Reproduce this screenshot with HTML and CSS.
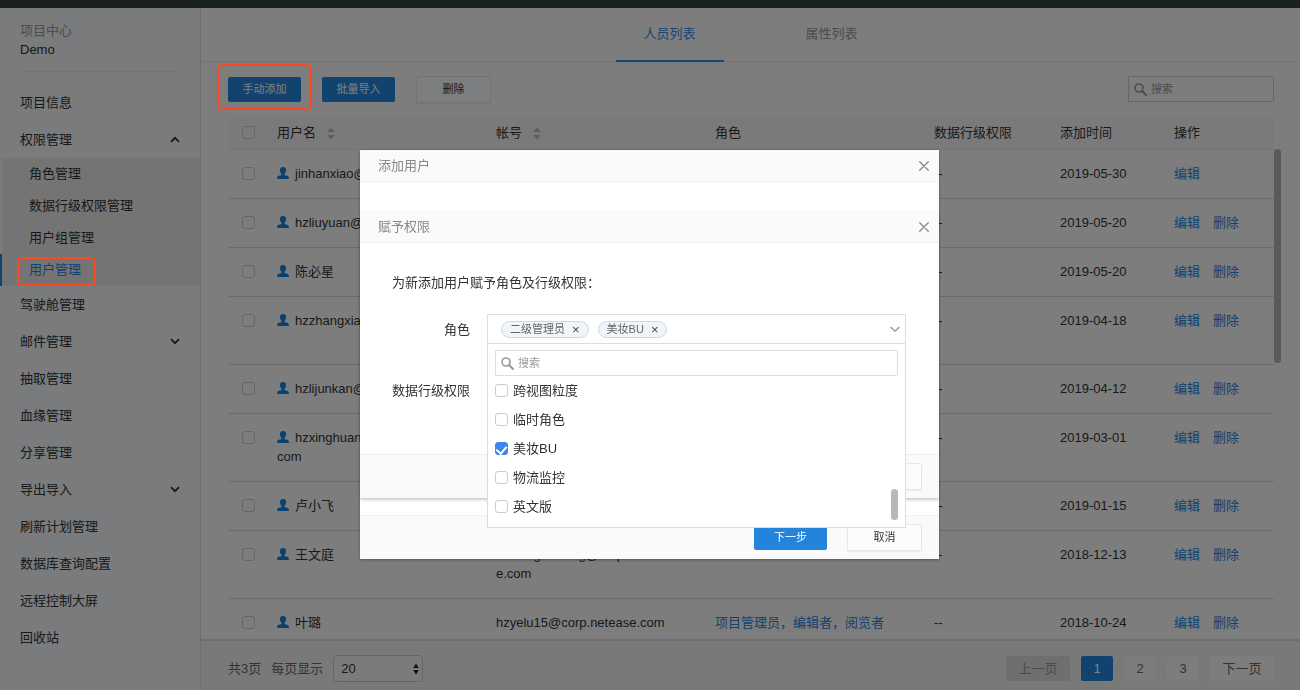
FILE: index.html
```html
<!DOCTYPE html>
<html lang="zh-CN">
<head>
<meta charset="utf-8">
<title>用户管理</title>
<link rel="stylesheet" href="styles.css">
</head>
<body>
<svg class="defs" aria-hidden="true">
  <symbol id="user" viewBox="0 0 12 12"><path d="M6 0C4 0 2.900 1.300 2.900 3.100c0 1.600.700 2.900 1.600 3.800v1.200C3.400 8.700.300 8.700.200 10.600V12h11.600v-1.400C11.700 8.700 8.600 8.700 7.500 8.100V6.900c.900-.900 1.600-2.200 1.600-3.800C9.100 1.300 8 0 6 0z" fill="currentColor"/></symbol>
  <symbol id="search" viewBox="0 0 13 13"><circle cx="5" cy="5" r="4" fill="none" stroke="currentColor" stroke-width="1.600"/><path d="M8 8l4 4" stroke="currentColor" stroke-width="2" stroke-linecap="round"/></symbol>
  <symbol id="sort" viewBox="0 0 8 13"><path d="M4 .500L7.800 5H.200zM4 12.500L.200 8h7.600z" fill="currentColor"/></symbol>
  <symbol id="close" viewBox="0 0 10 10"><path d="M.700.700l8.600 8.600M9.300.700L.700 9.300" stroke="currentColor" stroke-width="1.300" stroke-linecap="round"/></symbol>
  <symbol id="down" viewBox="0 0 10 7"><path d="M1 1.200l4 4 4-4" fill="none" stroke="currentColor" stroke-width="1.800"/></symbol>
  <symbol id="up" viewBox="0 0 10 7"><path d="M1 5.800l4-4 4 4" fill="none" stroke="currentColor" stroke-width="1.800"/></symbol>
  <symbol id="down-thin" viewBox="0 0 10 7"><path d="M.700 1l4.300 4.300L9.300 1" fill="none" stroke="currentColor" stroke-width="1.100"/></symbol>
  <symbol id="updown" viewBox="0 0 6 12"><path d="M3 .500L5.800 5H.200zM3 11.500L.200 7h5.600z" fill="currentColor"/></symbol>
</svg>

<div class="app">
  <div class="topbar"></div>
  <div class="workspace">
    <nav class="sidebar">
      <div class="project">
        <div class="project-label">项目中心</div>
        <div class="project-name">Demo</div>
      </div>
      <a class="nav-item" href="#">项目信息</a>
      <button class="nav-item" type="button">权限管理<svg class="caret"><use href="#up"/></svg></button>
      <div class="submenu">
        <a class="sub-item" href="#">角色管理</a>
        <a class="sub-item" href="#">数据行级权限管理</a>
        <a class="sub-item" href="#">用户组管理</a>
        <a class="sub-item active" href="#">用户管理</a>
      </div>
      <a class="nav-item" href="#">驾驶舱管理</a>
      <button class="nav-item" type="button">邮件管理<svg class="caret"><use href="#down"/></svg></button>
      <a class="nav-item" href="#">抽取管理</a>
      <a class="nav-item" href="#">血缘管理</a>
      <a class="nav-item" href="#">分享管理</a>
      <button class="nav-item" type="button">导出导入<svg class="caret"><use href="#down"/></svg></button>
      <a class="nav-item" href="#">刷新计划管理</a>
      <a class="nav-item" href="#">数据库查询配置</a>
      <a class="nav-item" href="#">远程控制大屏</a>
      <a class="nav-item" href="#">回收站</a>
    </nav>

    <main class="main">
      <div class="tabs">
        <a class="tab current" href="#">人员列表</a>
        <a class="tab" href="#">属性列表</a>
      </div>
      <div class="toolbar">
        <button class="btn primary" type="button">手动添加</button>
        <button class="btn primary" type="button">批量导入</button>
        <button class="btn plain" type="button">删除</button>
        <label class="search toolbar-search"><svg class="search-icon"><use href="#search"/></svg><input type="text" placeholder="搜索" aria-label="搜索用户"></label>
      </div>
      <div class="table-area">
        <table class="users">
          <colgroup><col class="c-check"><col><col><col><col class="c-perm"><col class="c-time"><col class="c-op"></colgroup>
          <thead>
            <tr><th class="check"><input type="checkbox" aria-label="全选"></th><th>用户名<svg class="sort"><use href="#sort"/></svg></th><th>帐号<svg class="sort"><use href="#sort"/></svg></th><th>角色</th><th>数据行级权限</th><th>添加时间</th><th>操作</th></tr>
          </thead>
          <tbody>
            <tr><td class="check"><input type="checkbox" aria-label="选择 jinhanxiao"></td><td><svg class="user"><use href="#user"/></svg>jinhanxiao@</td><td></td><td></td><td>--</td><td>2019-05-30</td><td><a href="#">编辑</a></td></tr>
            <tr><td class="check"><input type="checkbox" aria-label="选择 hzliuyuan"></td><td><svg class="user"><use href="#user"/></svg>hzliuyuan@</td><td></td><td></td><td>--</td><td>2019-05-20</td><td><a href="#">编辑</a><a href="#">删除</a></td></tr>
            <tr><td class="check"><input type="checkbox" aria-label="选择 陈必星"></td><td><svg class="user"><use href="#user"/></svg>陈必星</td><td></td><td></td><td>--</td><td>2019-05-20</td><td><a href="#">编辑</a><a href="#">删除</a></td></tr>
            <tr class="two-line"><td class="check"><input type="checkbox" aria-label="选择 hzzhangxiao"></td><td><svg class="user"><use href="#user"/></svg>hzzhangxiao</td><td></td><td></td><td>--</td><td>2019-04-18</td><td><a href="#">编辑</a><a href="#">删除</a></td></tr>
            <tr><td class="check"><input type="checkbox" aria-label="选择 hzlijunkan"></td><td><svg class="user"><use href="#user"/></svg>hzlijunkan@</td><td></td><td></td><td>--</td><td>2019-04-12</td><td><a href="#">编辑</a><a href="#">删除</a></td></tr>
            <tr class="two-line"><td class="check"><input type="checkbox" aria-label="选择 hzxinghuan"></td><td><svg class="user"><use href="#user"/></svg>hzxinghuan<br>com</td><td></td><td></td><td>--</td><td>2019-03-01</td><td><a href="#">编辑</a><a href="#">删除</a></td></tr>
            <tr><td class="check"><input type="checkbox" aria-label="选择 卢小飞"></td><td><svg class="user"><use href="#user"/></svg>卢小飞</td><td></td><td></td><td>--</td><td>2019-01-15</td><td><a href="#">编辑</a><a href="#">删除</a></td></tr>
            <tr class="two-line"><td class="check"><input type="checkbox" aria-label="选择 王文庭"></td><td><svg class="user"><use href="#user"/></svg>王文庭</td><td>hzwangwenting@corp.neteas<br>e.com</td><td></td><td>--</td><td>2018-12-13</td><td><a href="#">编辑</a><a href="#">删除</a></td></tr>
            <tr><td class="check"><input type="checkbox" aria-label="选择 叶璐"></td><td><svg class="user"><use href="#user"/></svg>叶璐</td><td>hzyelu15@corp.netease.com</td><td class="roles">项目管理员，编辑者，阅览者</td><td>--</td><td>2018-10-24</td><td><a href="#">编辑</a><a href="#">删除</a></td></tr>
          </tbody>
        </table>
        <div class="table-thumb"></div>
      </div>
      <footer class="pager">
        <span>共3页</span>
        <label for="page-size">每页显示</label>
        <span class="page-size"><select id="page-size"><option>20</option></select><svg class="updown"><use href="#updown"/></svg></span>
        <div class="pages">
          <button class="page wide off" type="button">上一页</button>
          <button class="page on" type="button">1</button>
          <button class="page" type="button">2</button>
          <button class="page" type="button">3</button>
          <button class="page wide" type="button">下一页</button>
        </div>
      </footer>
    </main>
  </div>
</div>

<div class="overlay">
  <section class="modal add-user" role="dialog" aria-label="添加用户">
    <header class="modal-head"><span>添加用户</span><button class="close" type="button" aria-label="关闭"><svg><use href="#close"/></svg></button></header>
    <div class="modal-body"></div>
    <footer class="modal-foot"><button class="btn primary" type="button">下一步</button><button class="btn plain" type="button">取消</button></footer>

    <section class="modal grant" role="dialog" aria-label="赋予权限">
      <header class="modal-head"><span>赋予权限</span><button class="close" type="button" aria-label="关闭"><svg><use href="#close"/></svg></button></header>
      <div class="grant-body">
        <p class="hint">为新添加用户赋予角色及行级权限：</p>
        <div class="field">
          <span class="field-label">角色</span>
          <div class="picker">
            <div class="picker-box">
              <span class="tag">二级管理员<button type="button" aria-label="移除二级管理员">×</button></span>
              <span class="tag">美妆BU<button type="button" aria-label="移除美妆BU">×</button></span>
              <svg class="picker-caret"><use href="#down-thin"/></svg>
            </div>
            <div class="dropdown">
              <label class="search"><svg class="search-icon"><use href="#search"/></svg><input type="text" placeholder="搜索" aria-label="搜索角色"></label>
              <label class="option"><input type="checkbox">跨视图粒度</label>
              <label class="option"><input type="checkbox">临时角色</label>
              <label class="option"><input type="checkbox" checked>美妆BU</label>
              <label class="option"><input type="checkbox">物流监控</label>
              <label class="option"><input type="checkbox">英文版</label>
              <div class="dropdown-thumb"></div>
            </div>
          </div>
        </div>
        <div class="field">
          <span class="field-label">数据行级权限</span>
        </div>
      </div>
      <footer class="modal-foot"><button class="btn plain" type="button" aria-label="取消"></button></footer>
    </section>
  </section>
</div>

<div class="mark mark-add"></div>
<div class="mark mark-menu"></div>
</body>
</html>
```

FILE: styles.css
```css
* { box-sizing: border-box; }

body {
  margin: 0;
  font: 13px/19px "Liberation Sans", "Noto Sans CJK SC", sans-serif;
  color: #333;
}

a { color: inherit; text-decoration: none; }
button, input, select { font: inherit; color: inherit; }
button { border: 0; padding: 0; background: none; }
.defs { position: absolute; width: 0; height: 0; }

.app { display: flex; flex-direction: column; height: 100vh; overflow: hidden; }
.topbar { height: 8px; flex: none; background: #364042; }
.workspace { display: flex; flex: 1; min-height: 0; }

/* Sidebar */
.sidebar { width: 201px; flex: none; background: #f4f6f9; border-right: 1px solid #dcdcdc; }
.project { margin: 0 22px 12px 20px; padding: 13px 0 12px; border-bottom: 1px solid #e8eaed; }
.project-label { color: #999; line-height: 19px; }
.project-name { line-height: 19px; }
.nav-item { display: flex; align-items: center; justify-content: space-between; width: 100%; height: 37px; padding: 0 20px; }
.caret { width: 10px; height: 7px; }
.submenu { background: #e9e9e9; border-left: 2px solid #f4f6f9; }
.sub-item { display: block; line-height: 32px; padding-left: 27px; }
.sub-item.active { margin-left: -2px; border-left: 2px solid #2484dc; color: #2484dc; }

/* Main */
.main { flex: 1; min-width: 0; display: flex; flex-direction: column; background: #fbfbfb; }
.tabs { display: flex; justify-content: center; gap: 54px; height: 54px; flex: none; border-bottom: 1px solid #e8e8e8; }
.tab { width: 108px; height: 54px; line-height: 51px; text-align: center; color: #999; border-bottom: 2px solid transparent; }
.tab.current { color: #2d8cf0; border-bottom-color: #2d8cf0; }

.toolbar { display: flex; align-items: center; gap: 21px; height: 54px; flex: none; padding: 0 26px 0 27px; }
.btn { width: 73px; height: 25px; border-radius: 2px; font-size: 11px; line-height: 25px; text-align: center; }
.btn.primary { background: #2484dc; color: #fff; }
.btn.plain { width: 75px; height: 27px; line-height: 25px; background: #fafcfe; border: 1px solid #e6e6e6; box-shadow: 0 1px 1px rgba(0, 0, 0, .06); }
.search { display: flex; align-items: center; gap: 4px; height: 26px; padding: 0 5px; border: 1px solid #ccc; border-radius: 1px; font-size: 11px; }
.search input { flex: 1; min-width: 0; border: 0; padding: 0; outline: 0; background: none; }
.search input::placeholder { color: #999; }
.search-icon { width: 13px; height: 13px; flex: none; color: #999; }
.toolbar-search { width: 146px; margin-left: auto; }

.table-area { position: relative; flex: 1; min-height: 0; overflow: hidden; padding: 0 26px 0 27px; }
.users { width: 100%; table-layout: fixed; border-collapse: separate; border-spacing: 0; }
.c-check { width: 39px; }
.c-perm { width: 126px; }
.c-time { width: 114px; }
.c-op { width: 110px; }
.users th { height: 34px; padding: 0 10px; background: #f5f5f5; border-bottom: 1px solid #e6e6e6; font-weight: normal; text-align: left; }
.users td { padding: 14px 0 15px 10px; border-bottom: 1px solid #d8d8d8; vertical-align: top; white-space: nowrap; }
.users .two-line td { height: 68px; }
.users .check { padding-left: 14px; padding-right: 0; }
.users td a { color: #2484dc; margin-right: 13px; }
.users .roles { color: #2484dc; }
.sort { width: 8px; height: 13px; margin-left: 11px; vertical-align: -3px; color: #bbb; }
.user { width: 12px; height: 12px; margin-right: 6px; vertical-align: -1px; color: #1482dc; }

input[type="checkbox"] {
  appearance: none;
  display: block;
  width: 13px;
  height: 13px;
  margin: 0;
  border: 1px solid #ccc;
  border-radius: 3px;
  background: #fff;
}
.users input[type="checkbox"] { background: none; }
.users td input[type="checkbox"] { margin-top: 3px; }
.option input[type="checkbox"]:checked {
  border-color: #3b87f7;
  background: #3b87f7;
}
.option input[type="checkbox"]:checked::before {
  content: "";
  display: block;
  width: 5px;
  height: 8px;
  margin: 1px auto 0;
  border: solid #fff;
  border-width: 0 2px 2px 0;
  transform: rotate(40deg);
}
.table-thumb { position: absolute; top: 33px; right: 19px; width: 7px; height: 214px; border-radius: 4px; background: #b4b4b4; }

.pager { display: flex; align-items: center; height: 51px; flex: none; padding: 6px 26px 0 27px; gap: 10px; border-top: 2px solid #dcdcdc; background: #f3f3f3; color: #666; }
.page-size { position: relative; width: 90px; }
.page-size select { appearance: none; display: block; width: 100%; height: 27px; padding: 0 7px; border: 1px solid #ccc; border-radius: 4px; background: #f7f7f7; color: #333; }
.updown { position: absolute; right: 4px; top: 8px; width: 6px; height: 12px; color: #222; }
.pages { display: flex; gap: 11px; margin-left: auto; }
.page { width: 32px; height: 25px; border-radius: 2px; background: #fbfbfb; }
.page.wide { width: 64px; }
.page.off { background: #dedede; color: #999; }
.page.on { background: #2484dc; color: #fff; }

/* Dialogs */
.overlay { position: fixed; inset: 0; display: flex; justify-content: center; align-items: flex-start; padding: 150px 1px 0 0; background: rgba(0, 0, 0, .5); }
.modal { background: #fff; border-radius: 1px; box-shadow: 0 1px 3px rgba(0, 0, 0, .35); }
.add-user { position: relative; width: 579px; }
.modal-head { display: flex; align-items: center; justify-content: space-between; height: 32px; padding: 0 10px 0 18px; background: #fafafa; border-bottom: 1px solid #f0f0f0; color: #888; }
.close { display: flex; color: #888; }
.close svg { width: 10px; height: 10px; }
.modal-body { height: 333px; }
.modal-foot { display: flex; align-items: center; justify-content: flex-end; gap: 20px; height: 44px; padding: 0 17px; background: #fafafa; border-top: 1px solid #f0f0f0; }
.grant { position: absolute; top: 61px; left: 0; right: 0; box-shadow: 0 2px 3px rgba(0, 0, 0, .2); }
.grant-body { height: 211px; padding: 30px 33px 0 32px; }
.hint { margin: 0 0 22px; }
.field { display: flex; align-items: center; gap: 17px; height: 30px; margin-bottom: 31px; }
.field-label { width: 78px; text-align: right; }
.picker { position: relative; flex: 1; }
.picker-box { display: flex; align-items: center; gap: 9px; height: 30px; padding: 0 5px 0 13px; border: 1px solid #ddd; border-radius: 1px; }
.tag { display: flex; align-items: center; gap: 7px; height: 17px; padding: 0 8px; border: 1px solid #cdd8e8; border-radius: 9px; background: #f1f5f9; font-size: 11px; color: #666; }
.tag button { font-size: 13px; line-height: 15px; color: #444; }
.picker-caret { width: 10px; height: 7px; margin-left: auto; color: #888; }
.dropdown { position: absolute; top: 29px; left: 0; right: 0; padding: 6px 7px; border: 1px solid #ddd; background: #fff; }
.dropdown .search { border-color: #ddd; }
.option { display: flex; align-items: center; gap: 5px; height: 29px; }
.dropdown-thumb { position: absolute; right: 7px; bottom: 7px; width: 7px; height: 31px; border-radius: 4px; background: #b8b8b8; }

/* Highlight frames */
.mark { position: fixed; border: 2px solid #fc4722; border-radius: 5px; pointer-events: none; }
.mark-add { left: 217px; top: 64px; width: 95px; height: 46px; }
.mark-menu { left: 17px; top: 257px; width: 79px; height: 29px; }
```
